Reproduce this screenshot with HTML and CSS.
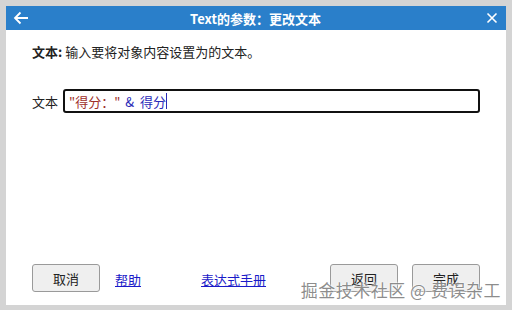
FILE: index.html
```html
<!DOCTYPE html>
<html>
<head>
    <meta charset="UTF-8">
    <title>Text的参数</title>
    <link rel="stylesheet" href="styles.css">
</head>
<body>
    <div class="dialog">
        <div class="titlebar">
            <svg class="icon-back" width="16" height="14" viewBox="0 0 16 14">
                <path d="M15 7H2M7.5 1.5L2 7l5.5 5.5" fill="none" stroke="#fff" stroke-width="1.8"/>
            </svg>
            <div class="title">Text的参数：更改文本</div>
            <svg class="icon-close" width="12" height="12" viewBox="0 0 12 12">
                <path d="M1.5 1.5l9 9M10.5 1.5l-9 9" fill="none" stroke="#fff" stroke-width="1.6"/>
            </svg>
        </div>
        <div class="content">
            <p class="desc"><b>文本:</b> 输入要将对象内容设置为的文本。</p>
            <div class="form-row">
                <label class="field-label">文本</label>
                <div class="expr-input">
                    <span class="str">"得分："</span>
                    <span class="op">&amp; 得分</span><span class="caret"></span>
                </div>
            </div>
        </div>
        <div class="footer">
            <button class="button">取消</button>
            <a class="link help" href="#">帮助</a>
            <a class="link manual" href="#">表达式手册</a>
            <button class="button back">返回</button>
            <button class="button">完成</button>
        </div>
        <div class="watermark">掘金技术社区 @ 费误杂工</div>
    </div>
</body>
</html>
```

FILE: styles.css
```css
body {
    margin: 0;
    padding: 6px;
    background-color: #D4D4D4;
    font-family: "Noto Sans CJK SC", "Liberation Sans", sans-serif;
    font-size: 13px;
    color: #222222;
}

.dialog {
    position: relative;
    width: 500px;
    height: 299px;
    background-color: #FFFFFF;
    display: flex;
    flex-direction: column;
}

.titlebar {
    height: 24px;
    background-color: #2A7FCA;
    display: flex;
    align-items: center;
    padding: 0 8px 0 7px;
    color: #FFFFFF;
}

.title {
    flex: 1;
    text-align: center;
    font-weight: bold;
    font-size: 13px;
    padding-right: 4px;
}

.content {
    flex: 1;
    padding: 13px 26px 0 26px;
}

.desc {
    margin: 0;
    line-height: 18px;
}

.form-row {
    display: flex;
    align-items: center;
    margin-top: 28px;
}

.field-label {
    width: 31px;
}

.expr-input {
    flex: 1;
    height: 20px;
    border: 2px solid #111111;
    border-radius: 3px;
    display: flex;
    align-items: center;
    padding: 0 4px;
}

.str {
    color: #A0302A;
}

.op {
    color: #2A2AB8;
    margin-left: 5px;
    word-spacing: 3px;
}

.caret {
    width: 1px;
    height: 16px;
    background-color: #2A2AB8;
}

.footer {
    display: flex;
    align-items: center;
    padding: 0 26px 13px 26px;
}

.button {
    width: 68px;
    height: 28px;
    border: 1px solid #9A9A9A;
    border-radius: 3px;
    background-color: #EFEFEF;
    font-family: inherit;
    font-size: 13px;
    color: #222222;
    padding: 0;
}

.link {
    color: #1A1AC8;
    text-decoration: underline;
    margin-top: 2px;
}

.help {
    margin-left: 15px;
}

.manual {
    margin-left: 60px;
}

.back {
    margin-left: auto;
    margin-right: 14px;
}

.watermark {
    position: absolute;
    right: 5px;
    bottom: 3px;
    font-size: 17px;
    color: rgba(120, 120, 120, 0.85);
    text-shadow: 0 0 2px #FFFFFF, 0 0 2px #FFFFFF;
    letter-spacing: 0.5px;
}
```
